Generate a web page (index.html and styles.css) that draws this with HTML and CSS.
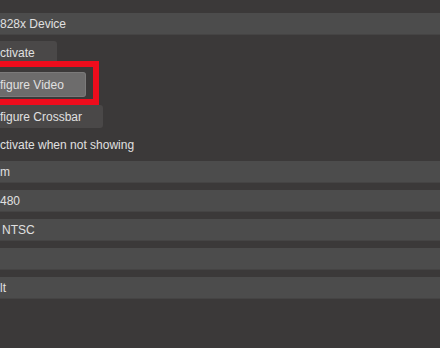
FILE: index.html
```html
<!DOCTYPE html>
<html>
<head>
<meta charset="utf-8">
<link rel="stylesheet" href="styles.css">
</head>
<body>
<div class="panel">
  <div class="field first"><span class="txt">828x Device</span></div>
  <div class="buttons">
    <div class="btn w-act"><span class="txt">ctivate</span></div>
    <div class="btn hover w-video"><span class="txt">figure Video</span>
      <div class="highlight"></div>
    </div>
    <div class="btn w-cross"><span class="txt">figure Crossbar</span></div>
  </div>
  <div class="check"><span class="txt">ctivate when not showing</span></div>
  <div class="fields">
    <div class="field"><span class="txt">m</span></div>
    <div class="field"><span class="txt">480</span></div>
    <div class="field"><span class="txt ntsc">NTSC</span></div>
    <div class="field"><span class="txt"></span></div>
    <div class="field"><span class="txt">lt</span></div>
  </div>
</div>
</body>
</html>
```

FILE: styles.css
```css
html, body {
  margin: 0;
  padding: 0;
  background: #3b3939;
  width: 440px;
  height: 348px;
  overflow: hidden;
}
.panel {
  padding-top: 13px;
  font-family: "Liberation Sans", Arial, sans-serif;
  font-size: 12px;
  color: #e0e0e0;
  display: flex;
  flex-direction: column;
}
.field {
  height: 22px;
  background: #4c4c4c;
  border-bottom: 1px solid #454444;
  box-sizing: border-box;
  display: flex;
  align-items: center;
}
.txt {
  line-height: 16px;
  white-space: nowrap;
}
.ntsc {
  padding-left: 2px;
}
.buttons {
  display: flex;
  flex-direction: column;
  align-items: flex-start;
  gap: 9px;
  margin-top: 6px;
}
.btn {
  position: relative;
  height: 23px;
  box-sizing: border-box;
  background: #4a4848;
  border-radius: 0 3px 3px 0;
  display: flex;
  align-items: center;
}
.btn.hover {
  background: #6d6c6c;
  border: 1px solid #7b7a7a;
  border-left: none;
  height: 25px;
  margin-top: -1px;
  margin-bottom: -1px;
}
.w-act { width: 57px; }
.w-video { width: 86px; }
.w-cross { width: 103px; }
.highlight {
  position: absolute;
  left: -10px;
  top: -12px;
  width: 97px;
  height: 32px;
  border: 6px solid #ee0c1c;
  pointer-events: none;
}
.check {
  height: 20px;
  margin-top: 7px;
  margin-bottom: 6px;
  display: flex;
  align-items: center;
}
.fields {
  display: flex;
  flex-direction: column;
  gap: 7px;
}
```
